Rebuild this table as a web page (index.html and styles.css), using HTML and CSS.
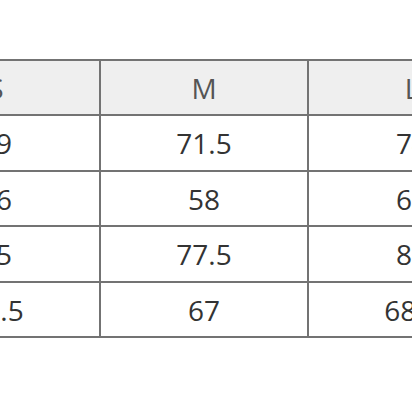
FILE: index.html
```html
<!DOCTYPE html>
<html>
<head>
<meta charset="utf-8">
<link rel="stylesheet" href="styles.css">
</head>
<body>
<div class="wrap">
<table class="size-table">
<thead>
<tr><th>S</th><th>M</th><th>L</th></tr>
</thead>
<tbody>
<tr class="r-a"><td>69</td><td>71.5</td><td>74</td></tr>
<tr class="r-b"><td>56</td><td>58</td><td>60</td></tr>
<tr class="r-a"><td>75</td><td>77.5</td><td>80</td></tr>
<tr class="r-b"><td>65.5</td><td>67</td><td>68.5</td></tr>
</tbody>
</table>
</div>
</body>
</html>
```
FILE: styles.css
```css
html, body {
  margin: 0;
  padding: 0;
  background: #ffffff;
  overflow: hidden;
}
.wrap {
  padding-top: 59px;
  margin-left: -109px;
  width: 700px;
}
.size-table {
  border-collapse: collapse;
  table-layout: fixed;
  width: 624px;
  font-family: "Open Sans", "Noto Sans", sans-serif;
  font-size: 28px;
  color: #333333;
}
.size-table th,
.size-table td {
  width: 206px;
  border: 2px solid #737373;
  text-align: center;
  vertical-align: middle;
  padding: 0;
  font-weight: 400;
}
.size-table th {
  background: #efefef;
  color: #555555;
  height: 53px;
}
.size-table .r-a td {
  height: 54px;
}
.size-table .r-b td {
  height: 53px;
}
```
